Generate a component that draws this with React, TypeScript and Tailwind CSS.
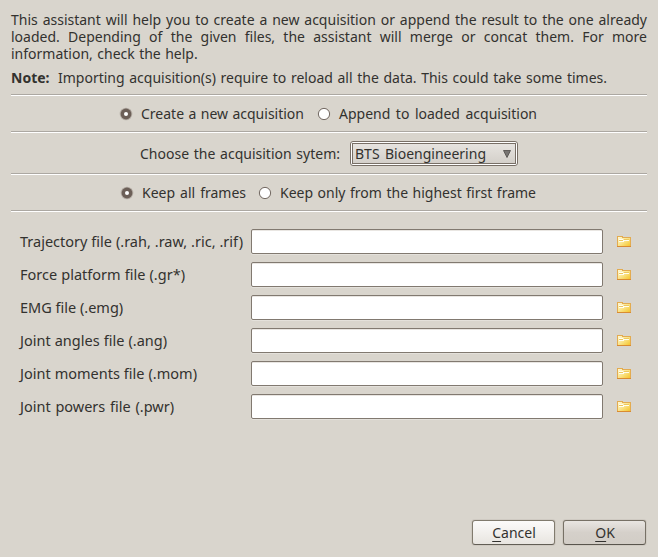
import React from "react";

const fit = "block whitespace-nowrap [text-align-last:justify]";

function Rule() {
  return <div className="mx-[11px] h-[2px] shrink-0 border-t border-b border-t-[#aca8a2] border-b-white" />;
}

function Radio({ on }: { on?: boolean }) {
  return (
    <svg width="14" height="14" viewBox="0 0 14 14" className="shrink-0">
      {on ? (
        <>
          <circle cx="7" cy="7" r="6.3" fill="#b5aea6" />
          <circle cx="7" cy="7" r="5.4" fill="#6c5f57" />
          <circle cx="7" cy="7" r="2" fill="#fff" />
        </>
      ) : (
        <>
          <circle cx="7" cy="7" r="6.3" fill="#cbc5bd" />
          <circle cx="7" cy="7" r="5.6" fill="#fff" stroke="#756c65" strokeWidth="1" />
        </>
      )}
    </svg>
  );
}

function Folder() {
  return (
    <svg width="14" height="11" viewBox="0 0 14 11" className="mb-[2px] ml-[14px] shrink-0" shapeRendering="crispEdges">
      <defs>
        <linearGradient id="folder" x1="0" y1="0" x2="1" y2="1">
          <stop offset="0" stopColor="#fffbe0" />
          <stop offset="0.5" stopColor="#fae48a" />
          <stop offset="1" stopColor="#f5c222" />
        </linearGradient>
      </defs>
      <path d="M0.5 0.5H5.5V1.5H13.5V10.5H0.5Z" fill="url(#folder)" stroke="#e3ab50" />
      <path d="M2 3H6V4H12V5H7V6H2Z" fill="#fffdf0" />
      <path d="M2 4H6V5H2ZM7 3H12V4H7Z" fill="#ecc860" />
      <path d="M0 10H14V11H0Z" fill="#d98b31" />
    </svg>
  );
}

const files = [
  { label: "Trajectory file (.rah, .raw, .ric, .rif)", width: "w-[223px]" },
  { label: "Force platform file (.gr*)", width: "w-[165px]" },
  { label: "EMG file (.emg)", width: "w-[102px]" },
  { label: "Joint angles file (.ang)", width: "w-[147px]" },
  { label: "Joint moments file (.mom)", width: "w-[177px]" },
  { label: "Joint powers file (.pwr)", width: "w-[154px]" },
];

export default function App() {
  return (
    <div className="flex h-[557px] w-[658px] flex-col overflow-hidden bg-[#d9d5cd] font-['Noto_Sans',sans-serif] text-[14px] leading-[17px] text-[#33322f]">
      <div className="ml-[11px] h-[94px] shrink-0 pt-[11px]">
        <p className="w-[636px] text-justify [word-spacing:0.8px]">
          This assistant will help you to create a new acquisition or append the result to the one already loaded. Depending of the given files, the assistant will merge or concat them. For more information, check the help.
        </p>
        <div className="mt-[7px] flex">
          <b className="w-[47px] whitespace-nowrap">Note:</b>
          <span className={`${fit} w-[549px]`}>Importing acquisition(s) require to reload all the data. This could take some times.</span>
        </div>
      </div>
      <Rule />
      <div className="flex h-[35px] shrink-0 items-center pl-[119px]">
        <Radio on />
        <span className={`${fit} ml-2 w-[163px]`}>Create a new acquisition</span>
        <span className="ml-[13px] flex"><Radio /></span>
        <span className={`${fit} ml-2 w-[198px]`}>Append to loaded acquisition</span>
      </div>
      <Rule />
      <div className="flex h-[40px] shrink-0 items-center pl-[140px]">
        <span className={`${fit} w-[200px]`}>Choose the acquisition sytem:</span>
        <div className="ml-[10px] h-[25px] w-[168px] rounded-[3px] border border-[#786f66] bg-white p-px">
          <div className="flex h-full items-center border border-[#786f66] bg-linear-to-b from-[#e6e3df] to-[#d4d0ca] pl-[2px]">
            <span className={`${fit} w-[131px]`}>BTS Bioengineering</span>
            <svg width="8" height="8" viewBox="0 0 8 8" className="mt-[2px] ml-[17px]">
              <path d="M0.5 0.5H7.5L4 7.5Z" fill="#777472" stroke="#4c4946" strokeWidth=".8" />
            </svg>
          </div>
        </div>
      </div>
      <Rule />
      <div className="flex h-[35px] shrink-0 items-center pl-[120px]">
        <Radio on />
        <span className={`${fit} ml-2 w-[104px]`}>Keep all frames</span>
        <span className="ml-[12px] flex"><Radio /></span>
        <span className={`${fit} ml-2 w-[256px]`}>Keep only from the highest first frame</span>
      </div>
      <Rule />
      <div className="flex shrink-0 flex-col gap-[7px] pt-[17px] pl-[20px]">
        {files.map((f) => (
          <div key={f.label} className="flex h-[26px] items-center">
            <div className="w-[231px] shrink-0 pb-[2px] text-[14.5px]">
              <span className={`${fit} ${f.width}`}>{f.label}</span>
            </div>
            <input aria-label={f.label} className="mb-px h-[25px] w-[352px] rounded-[2px] border border-[#817970] bg-white shadow-[inset_0_1px_#e9e6e2,0_1px_#e4e1db] outline-none" />
            <Folder />
          </div>
        ))}
      </div>
      <div className="mt-auto mr-[12px] mb-[12px] flex shrink-0 justify-end gap-[8px]">
        <button className="flex h-[25px] w-[83px] items-center justify-center rounded-[3px] border border-[#817b6e] border-b-[#625e55] bg-linear-to-b from-[#fcfbfa] to-[#e8e5e0] pl-px shadow-[0_0_0_1px_#cfcac2]">
          <span><span className="underline decoration-1 underline-offset-[3px]">C</span>ancel</span>
        </button>
        <button className="flex h-[25px] w-[83px] items-center justify-center rounded-[3px] border border-[#777166] border-b-[#59554d] bg-linear-to-b from-[#e9e6e2] via-[#d5d0ca] to-[#d2cdc6] pl-px shadow-[0_0_0_1px_#cfcac2]">
          <span><span className="underline decoration-1 underline-offset-[3px]">O</span>K</span>
        </button>
      </div>
    </div>
  );
}
